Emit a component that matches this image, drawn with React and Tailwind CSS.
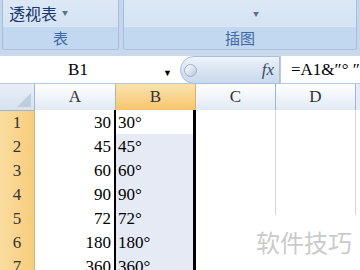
import React from 'react'

const rows = [
  ['1', '30'],
  ['2', '45'],
  ['3', '60'],
  ['4', '90'],
  ['5', '72'],
  ['6', '180'],
  ['7', '360'],
]

const serif = { fontFamily: '"Liberation Serif", "Noto Sans CJK SC", serif' }

function Ribbon() {
  return (
    <div className="flex h-[50px] bg-[#c4d6ec] pl-[2px] pr-[3px] pt-0 gap-[4px]">
      <div className="w-[117px] flex flex-col border border-t-0 border-[#a7bedb] rounded-b-[3px] overflow-hidden">
        <div className="h-[28px] bg-gradient-to-b from-[#dce8f6] to-[#d5e3f3] flex items-center pl-[6px] text-[16px] text-[#17376b]">
          透视表
          <span className="ml-[5px] text-[6px] text-[#5a6f8f]">▼</span>
        </div>
        <div className="flex-1 bg-[#c2d8f0] border-t border-[#d9e6f5] flex items-center justify-center text-[15px] text-[#3e68a4]">
          表
        </div>
      </div>
      <div className="flex-1 flex flex-col border border-t-0 border-[#a7bedb] rounded-b-[3px] overflow-hidden">
        <div className="h-[28px] bg-gradient-to-b from-[#dce8f6] to-[#d5e3f3] relative">
          <span className="absolute left-[129px] top-[9px] text-[6px] text-[#5a6f8f]">▼</span>
        </div>
        <div className="flex-1 bg-[#c2d8f0] border-t border-[#d9e6f5] flex items-center justify-center text-[15px] text-[#3e68a4]">
          插图
        </div>
      </div>
    </div>
  )
}

function FormulaBar() {
  return (
    <div className="flex h-[28px] bg-white border-b border-[#b7c9df]" style={serif}>
      <div className="w-[180px] flex items-center relative">
        <span className="w-[156px] text-center text-[17px] text-black">B1</span>
        <span className="absolute right-[8px] top-[11px] text-[9px] text-black">▼</span>
      </div>
      <div className="w-[100px] h-[28px] rounded-l-[14px] bg-gradient-to-b from-[#edf3fb] via-[#d8e4f2] to-[#c9d9ed] border border-[#a9bfda] flex items-center justify-between px-[3px]">
        <span className="w-[13px] h-[13px] rounded-full bg-gradient-to-br from-white to-[#b9c8da] border border-[#9fb2c9]" />
        <span className="italic text-[17px] text-[#3c4a5e] pr-[2px]">fx</span>
      </div>
      <div className="flex-1 flex items-center pl-[10px] text-[17px] text-black border-l border-[#b7c9df] whitespace-nowrap">
        =A1&amp;″°&nbsp;″
      </div>
    </div>
  )
}

function Grid() {
  return (
    <div className="relative" style={serif}>
      <div className="grid grid-cols-[35px_81px_80px_80px_80px_4px] h-[26px]">
        <div className="bg-gradient-to-b from-[#e8eff8] to-[#d6e2f1] border-r border-b border-[#9eb6ce] relative overflow-hidden">
          <div className="absolute right-[3px] bottom-[3px] w-0 h-0 border-l-[14px] border-l-transparent border-b-[14px] border-b-[#c1cddb]" />
        </div>
        <div className="bg-gradient-to-b from-white to-[#e1e9f4] border-r border-b border-[#9eb6ce] flex items-center justify-center text-[17px] text-[#333]">A</div>
        <div className="bg-gradient-to-b from-[#fbe3ad] to-[#f6c56e] border-r border-b border-[#f2b049] flex items-center justify-center text-[17px] text-[#333]">B</div>
        <div className="bg-gradient-to-b from-white to-[#e1e9f4] border-r border-b border-[#9eb6ce] flex items-center justify-center text-[17px] text-[#333]">C</div>
        <div className="bg-gradient-to-b from-white to-[#e1e9f4] border-r border-b border-[#9eb6ce] flex items-center justify-center text-[17px] text-[#333]">D</div>
        <div className="bg-[#e4ecf7]" />
      </div>
      {rows.map(([n, v], i) => (
        <div key={n} className="grid grid-cols-[35px_81px_80px_80px_80px_4px] h-[24px]">
          <div className="bg-gradient-to-r from-[#fbdca0] to-[#f7cd7c] border-r border-b border-[#e9b35a] flex items-center justify-center text-[17px] text-[#333]">{n}</div>
          <div className="bg-white border-r-[2px] border-b border-r-black border-b-[#d4d9e2] flex items-center justify-end pr-[3px] text-[17px] text-black">{v}</div>
          <div className={`${i === 0 ? 'bg-white' : 'bg-[#e6eaf5]'} border-r-[3px] border-b border-r-black border-b-[#d4d9e2] flex items-center pl-[2px] text-[17px] text-black`}>{v}°</div>
          <div className="bg-white border-r border-b border-[#d4d9e2]" />
          <div className="bg-white border-r border-b border-[#d4d9e2]" />
          <div className="bg-white" />
        </div>
      ))}
      <div className="absolute left-[250px] top-[131px] w-[110px] h-[60px] bg-white pt-[12px] pl-[6px] text-[24px] leading-[30px] text-[#cbcbcb]" style={{ fontFamily: '"Noto Sans CJK SC", sans-serif' }}>
        软件技巧
      </div>
    </div>
  )
}

export default function App() {
  return (
    <div className="w-[360px] h-[270px] overflow-hidden bg-white" style={{ fontFamily: '"Noto Sans CJK SC", sans-serif' }}>
      <Ribbon />
      <div className="h-[6px] bg-[#c9d9ec]" />
      <FormulaBar />
      <Grid />
    </div>
  )
}
